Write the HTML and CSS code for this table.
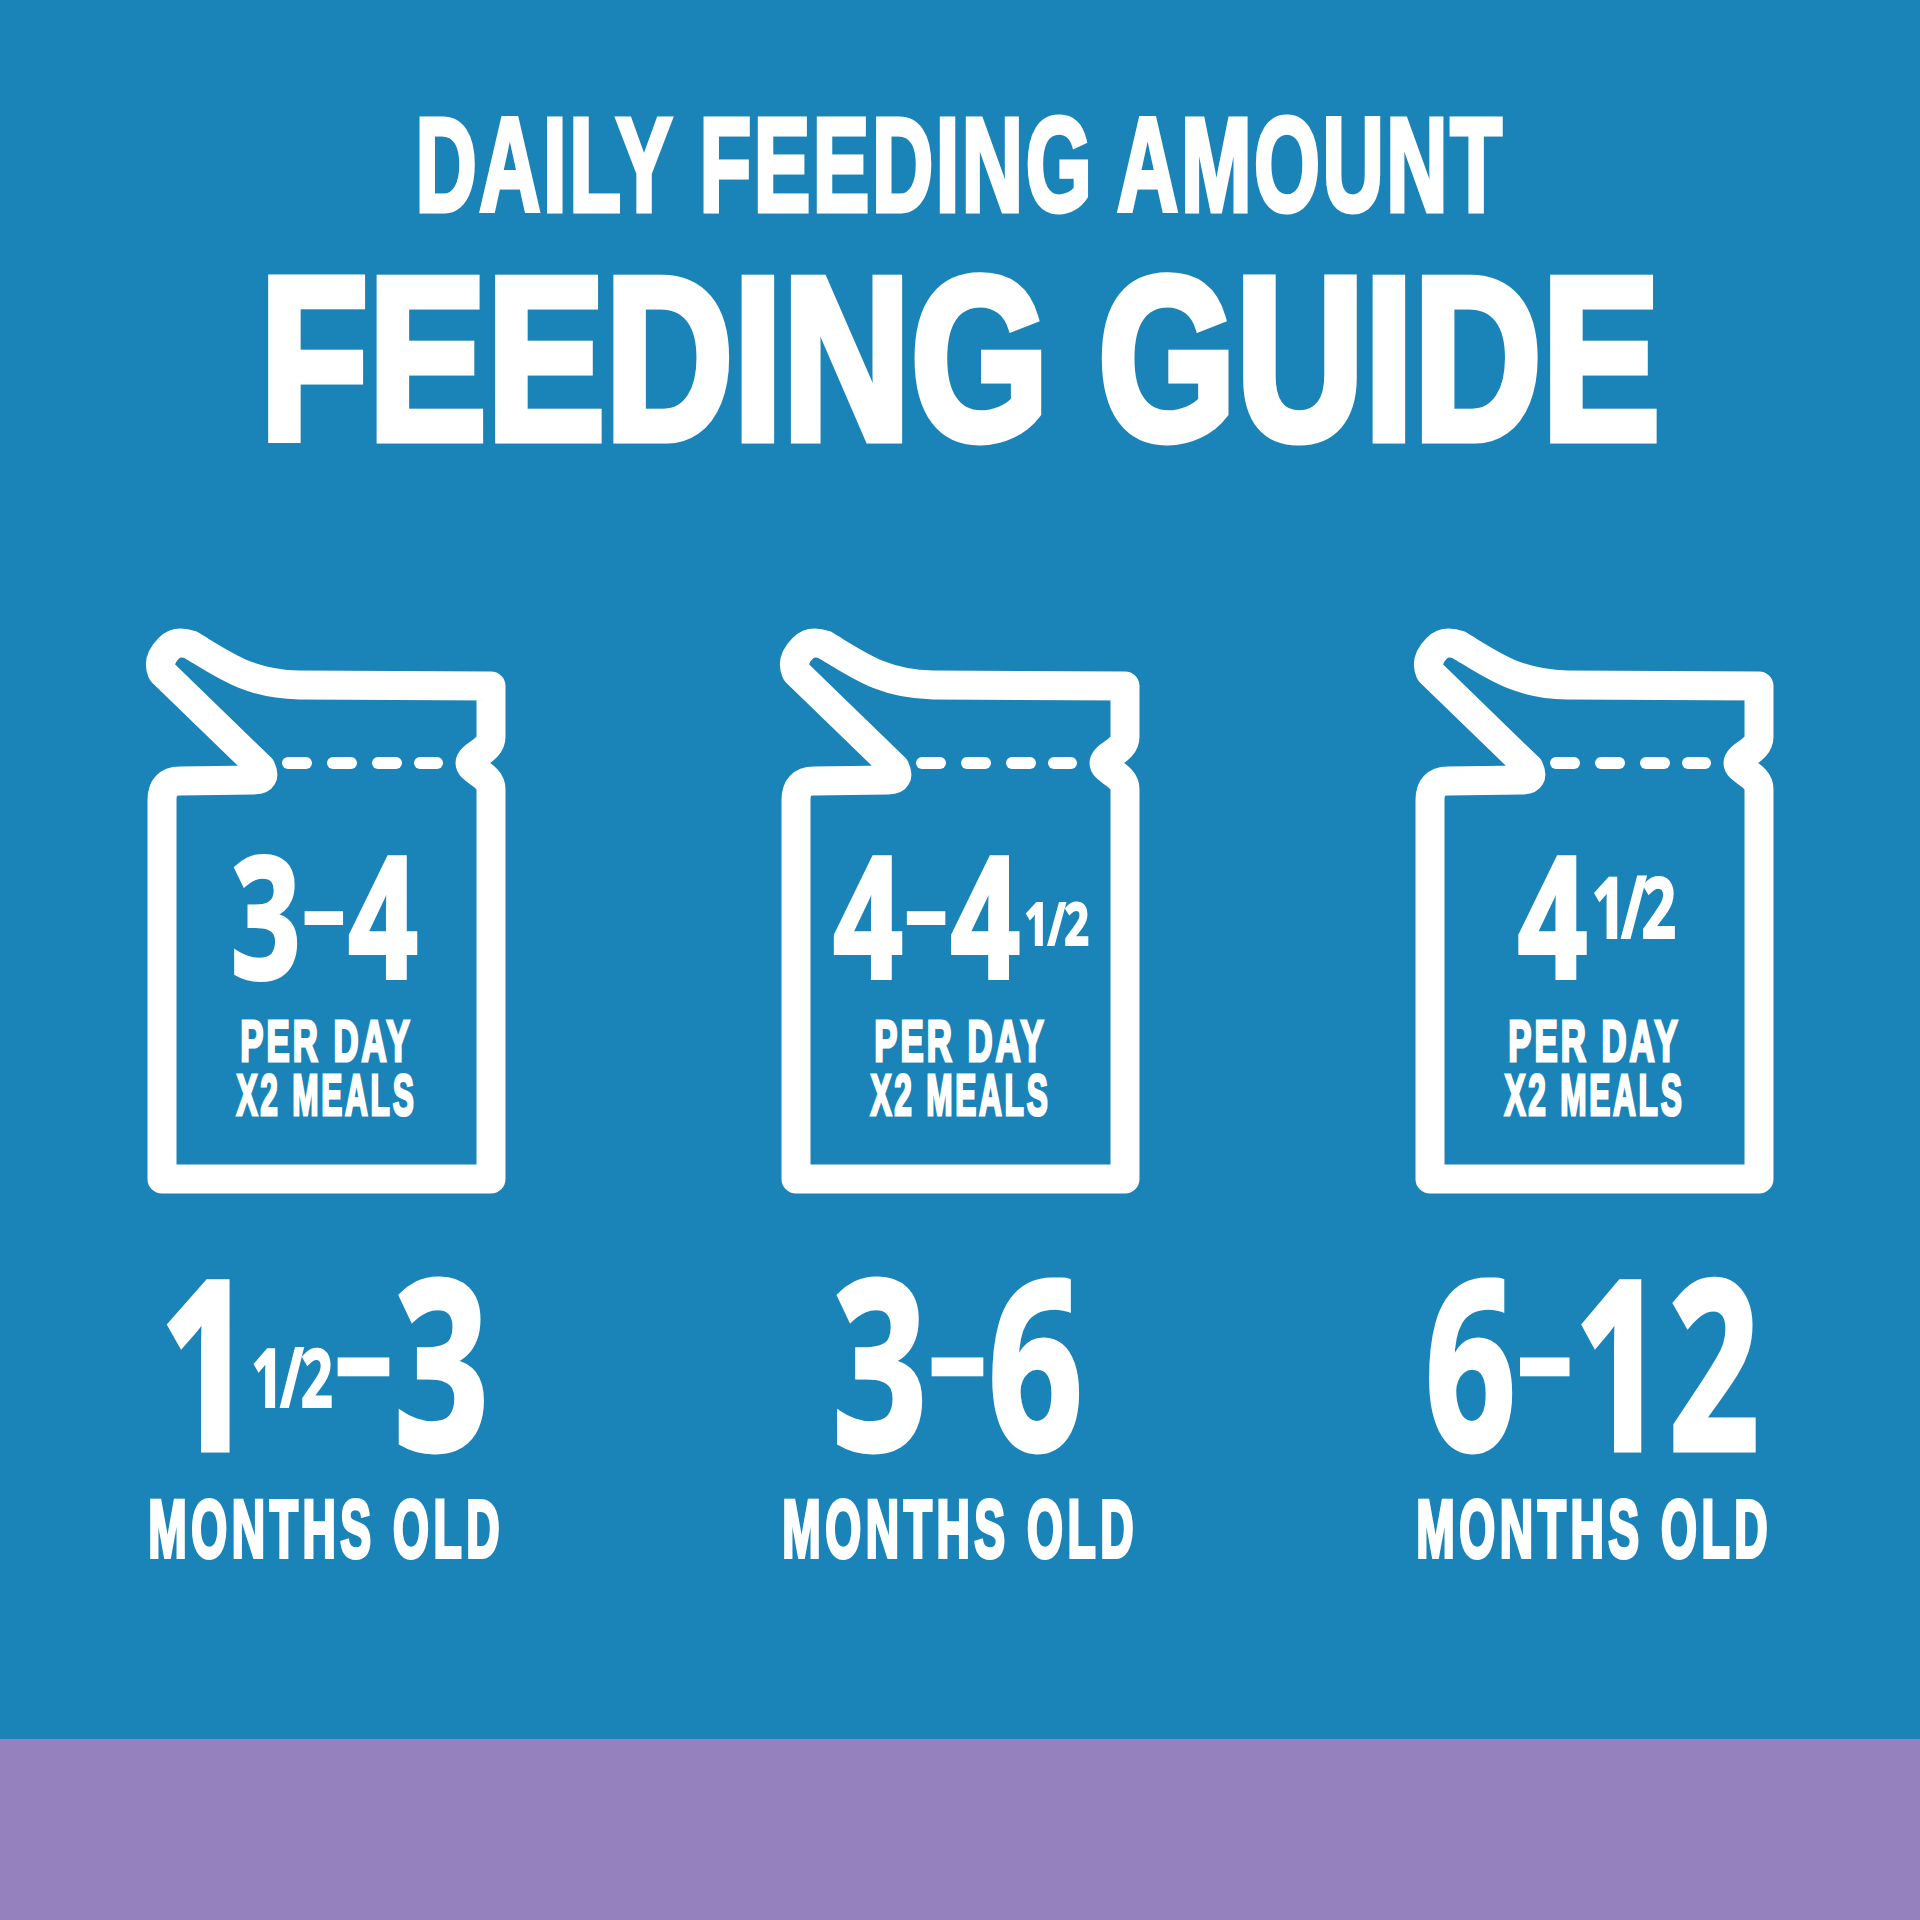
FILE: index.html
```html
<!DOCTYPE html>
<html lang="en">
<head>
<meta charset="utf-8">
<title>Feeding Guide</title>
<link rel="stylesheet" href="styles.css">
</head>
<body>
<main class="poster">
  <section class="panel">
    <header class="heading">
      <p class="kicker">DAILY FEEDING AMOUNT</p>
      <h1 class="title">FEEDING GUIDE</h1>
    </header>
    <div class="stages">
      <article class="stage">
        <div class="bag">
          <svg class="bag-outline" viewBox="0 0 365 572" aria-hidden="true">
            <path d="M117 143 L18 47 Q13 35 25 23 Q33 15 47 20 C80 40 105 59 155 60 L347 61 L347 112 C347 126 326 130 326 138 C326 146 347 150 347 164 L347 554 L18 554 L18 175 Q18 156 36 156 L110 155 Q123 155 117 143 Z"/>
            <g class="dashes">
              <line x1="144" y1="138" x2="162" y2="138"/>
              <line x1="189" y1="138" x2="207" y2="138"/>
              <line x1="234" y1="138" x2="252" y2="138"/>
              <line x1="276" y1="138" x2="293" y2="138"/>
            </g>
          </svg>
          <div class="bag-text">
            <p class="amount">3<span class="dash">-</span>4</p>
            <p class="per"><span class="per-day">PER DAY</span><span class="per-meals">X2 MEALS</span></p>
          </div>
        </div>
        <p class="age">1<span class="frac frac-age">1/2</span><span class="dash">-</span>3</p>
        <p class="age-label">MONTHS OLD</p>
      </article>
      <article class="stage">
        <div class="bag">
          <svg class="bag-outline" viewBox="0 0 365 572" aria-hidden="true">
            <path d="M117 143 L18 47 Q13 35 25 23 Q33 15 47 20 C80 40 105 59 155 60 L347 61 L347 112 C347 126 326 130 326 138 C326 146 347 150 347 164 L347 554 L18 554 L18 175 Q18 156 36 156 L110 155 Q123 155 117 143 Z"/>
            <g class="dashes">
              <line x1="144" y1="138" x2="162" y2="138"/>
              <line x1="189" y1="138" x2="207" y2="138"/>
              <line x1="234" y1="138" x2="252" y2="138"/>
              <line x1="276" y1="138" x2="293" y2="138"/>
            </g>
          </svg>
          <div class="bag-text">
            <p class="amount">4<span class="dash">-</span>4<span class="frac frac-small">1/2</span></p>
            <p class="per"><span class="per-day">PER DAY</span><span class="per-meals">X2 MEALS</span></p>
          </div>
        </div>
        <p class="age">3<span class="dash">-</span>6</p>
        <p class="age-label">MONTHS OLD</p>
      </article>
      <article class="stage">
        <div class="bag">
          <svg class="bag-outline" viewBox="0 0 365 572" aria-hidden="true">
            <path d="M117 143 L18 47 Q13 35 25 23 Q33 15 47 20 C80 40 105 59 155 60 L347 61 L347 112 C347 126 326 130 326 138 C326 146 347 150 347 164 L347 554 L18 554 L18 175 Q18 156 36 156 L110 155 Q123 155 117 143 Z"/>
            <g class="dashes">
              <line x1="144" y1="138" x2="162" y2="138"/>
              <line x1="189" y1="138" x2="207" y2="138"/>
              <line x1="234" y1="138" x2="252" y2="138"/>
              <line x1="276" y1="138" x2="293" y2="138"/>
            </g>
          </svg>
          <div class="bag-text">
            <p class="amount">4<span class="frac frac-large">1/2</span></p>
            <p class="per"><span class="per-day">PER DAY</span><span class="per-meals">X2 MEALS</span></p>
          </div>
        </div>
        <p class="age age-tight">6<span class="dash">-</span>12</p>
        <p class="age-label">MONTHS OLD</p>
      </article>
    </div>
  </section>
  <div class="band"></div>
</main>
</body>
</html>
```

FILE: styles.css
```css
* {
  box-sizing: border-box;
}

html, body {
  margin: 0;
  padding: 0;
}

body {
  width: 1920px;
  height: 1920px;
  font-family: "Liberation Sans", Arial, sans-serif;
  font-weight: 700;
  color: #ffffff;
  background: #9581bd;
}

p, h1 {
  margin: 0;
}

.poster {
  width: 1920px;
  height: 1920px;
  display: flex;
  flex-direction: column;
}

.panel {
  height: 1739px;
  background: #1a83b7;
  display: flex;
  flex-direction: column;
}

.band {
  flex: 1;
  background: #9581bd;
}

.heading {
  padding-top: 98px;
  text-align: center;
}

.kicker {
  font-size: 134px;
  line-height: 1;
  letter-spacing: 4px;
  white-space: nowrap;
  -webkit-text-stroke: 5px #ffffff;
  transform: scaleX(0.633);
}

.title {
  margin-top: 5px;
  padding-top: 6px;
  height: 245px;
  font-size: 232px;
  font-weight: 700;
  line-height: 1;
  white-space: nowrap;
  -webkit-text-stroke: 9px #ffffff;
  transform: scaleX(0.765);
}

.stages {
  margin-top: 143px;
  display: grid;
  grid-template-columns: repeat(3, 634px);
  justify-content: center;
}

.stage {
  display: flex;
  flex-direction: column;
  align-items: center;
  text-align: center;
}

.bag {
  position: relative;
  width: 365px;
  height: 572px;
  padding-top: 203px;
}

.bag-outline {
  position: absolute;
  left: 0;
  top: 0;
  width: 365px;
  height: 572px;
  overflow: visible;
}

.bag-outline path {
  fill: none;
  stroke: #ffffff;
  stroke-width: 29;
  stroke-linejoin: round;
  stroke-linecap: round;
}

.dashes line {
  stroke: #ffffff;
  stroke-width: 12;
  stroke-linecap: round;
}

.bag-text {
  position: relative;
}

.amount {
  font-family: "Noto Sans", "Liberation Sans", sans-serif;
  font-size: 169px;
  line-height: 1;
  letter-spacing: 6px;
  white-space: nowrap;
  -webkit-text-stroke: 4px #ffffff;
  transform: scaleX(0.72);
}

.dash {
  display: inline-block;
  transform: translateY(-0.03em) scale(1.1, 0.55);
}

.per {
  margin-top: 17px;
  font-size: 58px;
  line-height: 54px;
  letter-spacing: 5px;
  white-space: nowrap;
  -webkit-text-stroke: 3px #ffffff;
}

.per-day {
  display: block;
  transform: scaleX(0.6);
}

.per-meals {
  display: block;
  transform: scaleX(0.545);
}

.frac {
  -webkit-text-stroke: 2px #ffffff;
  letter-spacing: -0.03em;
}

.frac-small {
  font-size: 60px;
  vertical-align: 33px;
}

.frac-large {
  font-size: 84px;
  vertical-align: 40px;
  letter-spacing: -0.08em;
}

.frac-age {
  font-size: 80px;
  vertical-align: 43px;
  letter-spacing: -0.05em;
  margin-left: -10px;
  margin-right: 10px;
}

.age {
  margin-top: 44px;
  font-family: "Noto Sans", "Liberation Sans", sans-serif;
  font-size: 236px;
  line-height: 1;
  letter-spacing: 6px;
  white-space: nowrap;
  -webkit-text-stroke: 5px #ffffff;
  transform: scaleX(0.7);
}

.age-tight {
  transform: scaleX(0.67);
}

.age-label {
  margin-top: 12px;
  font-size: 81px;
  line-height: 1;
  letter-spacing: 8px;
  white-space: nowrap;
  -webkit-text-stroke: 4px #ffffff;
  transform: scaleX(0.57);
}
```
